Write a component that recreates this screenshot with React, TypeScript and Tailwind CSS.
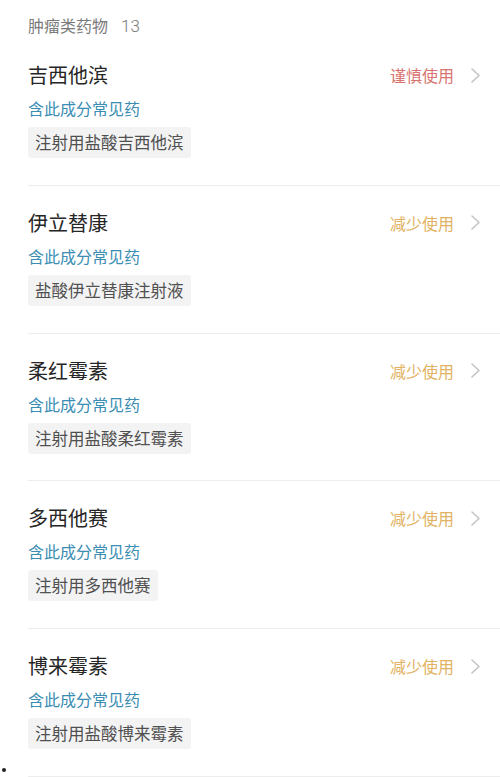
import React from "react";

const items = [
  { name: "吉西他滨", status: "谨慎使用", tone: "red", tag: "注射用盐酸吉西他滨" },
  { name: "伊立替康", status: "减少使用", tone: "gold", tag: "盐酸伊立替康注射液" },
  { name: "柔红霉素", status: "减少使用", tone: "gold", tag: "注射用盐酸柔红霉素" },
  { name: "多西他赛", status: "减少使用", tone: "gold", tag: "注射用多西他赛" },
  { name: "博来霉素", status: "减少使用", tone: "gold", tag: "注射用盐酸博来霉素" },
];

function Chevron() {
  return (
    <svg width="11" height="17" viewBox="0 0 11 17" fill="none">
      <path d="M2 2l7 6.5L2 15" stroke="#c4c4c4" strokeWidth="1.6" strokeLinecap="round" strokeLinejoin="round" />
    </svg>
  );
}

export default function App() {
  return (
    <div
      className="w-[500px] h-[777px] bg-white overflow-hidden relative"
      style={{ fontFamily: '"Noto Sans CJK SC", "Noto Sans", sans-serif' }}
    >
      <div className="pt-[13px] pl-[28px] h-[38px] text-[16px] leading-[24px] text-[#7a7a7a]">
        肿瘤类药物
        <span className="ml-[13px] text-[17px] font-light" style={{ fontFamily: '"Roboto", "Noto Sans", sans-serif' }}>
          13
        </span>
      </div>
      {items.map((it) => (
        <div key={it.name} className="ml-[28px] border-b border-[#ededed] pt-[23px] pb-[26.75px] pr-[19px]">
          <div className="flex items-center justify-between h-[28px]">
            <div className="text-[20px] leading-[28px] text-[#262626]">{it.name}</div>
            <div className="flex items-center gap-[16px]">
              <span
                className={
                  it.tone === "red"
                    ? "text-[16px] leading-[22px] text-[#d9736f]"
                    : "text-[16px] leading-[22px] text-[#e2b262]"
                }
              >
                {it.status}
              </span>
              <Chevron />
            </div>
          </div>
          <div className="mt-[8px] text-[16px] leading-[22px] text-[#3a8db3]">含此成分常见药</div>
          <div className="mt-[8px] flex">
            <div className="h-[31px] flex items-center px-[7px] rounded-[3px] bg-[#f3f3f4] text-[16.5px] text-[#505050]">
              {it.tag}
            </div>
          </div>
        </div>
      ))}
      <div className="absolute left-[2px] top-[768px] w-[4px] h-[4px] rounded-full bg-[#222]" />
    </div>
  );
}
